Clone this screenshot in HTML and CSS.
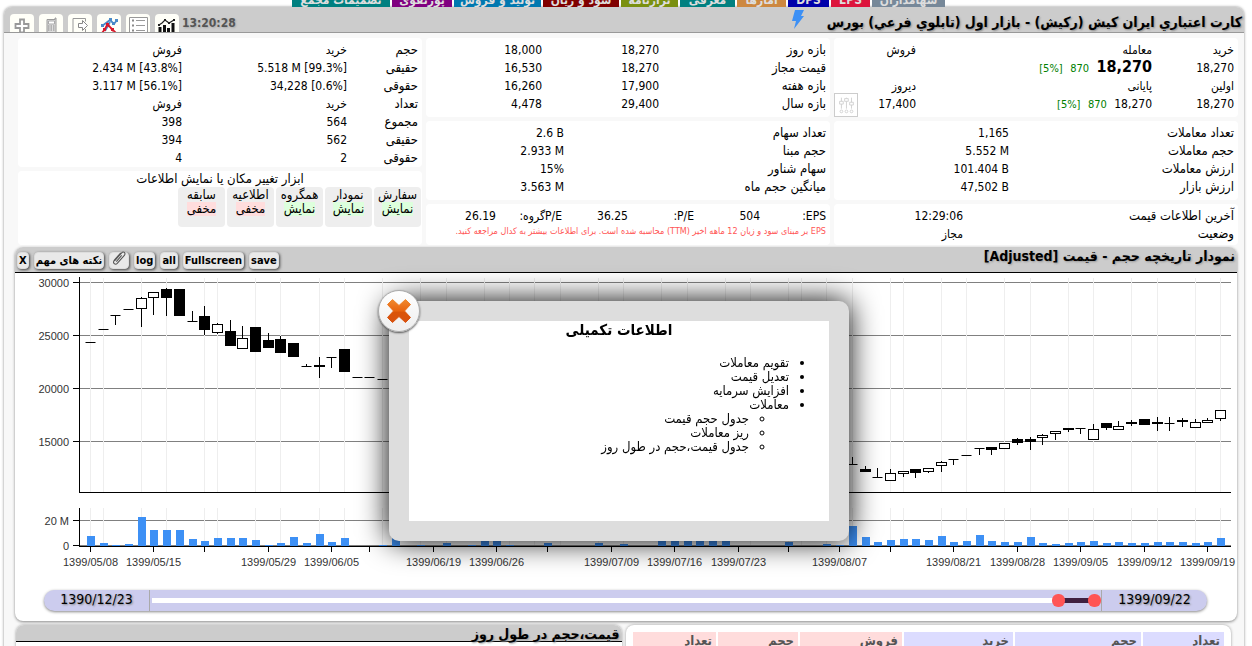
FILE: index.html
```html
<!DOCTYPE html>
<html lang="fa" dir="rtl">
<head>
<meta charset="utf-8">
<title>کارت اعتباري ايران كيش (رکیش)</title>
<link rel="stylesheet" href="styles.css">
</head>
<body>
<nav class="tabs">
  <a class="tab slate" href="#">سهامداران</a>
  <a class="tab crimson" href="#">EPS</a>
  <a class="tab navy" href="#">DPS</a>
  <a class="tab peru" href="#">آمارها</a>
  <a class="tab teal" href="#">معرفی</a>
  <a class="tab olive" href="#">ترازنامه</a>
  <a class="tab maroon" href="#">سود و زیان</a>
  <a class="tab blue" href="#">تولید و فروش</a>
  <a class="tab purple" href="#">پورتفوی</a>
  <a class="tab teal" href="#">تصمیمات مجمع</a>
</nav>

<main class="window">
  <header class="window-head">
    <h1>كارت اعتباري ايران كيش (رکيش) - بازار اول (تابلوي فرعي) بورس</h1>
    <svg class="bolt" viewBox="0 0 14 20"><path d="M4 0h9l-3 6h3L3 19l2-8H1z" fill="#3d90f5"/></svg>
    <div class="tools">
      <time>13:20:28</time>
      <button class="tool" aria-label="نمودار"><svg viewBox="0 0 24 18"><path d="M5 19V13M9.500 19v-8M13.500 19v-5M18 19V9" stroke="#111" stroke-width="3"/><path d="M4 11l3-2 3-3 4 3 5-3" fill="none" stroke="#222" stroke-width="1.200"/><path d="M3 10h2v2H3zM9 5h2v2H9zM13 8h2v2h-2zM18 5h2v2h-2z" fill="#222"/></svg></button>
      <button class="tool" aria-label="فهرست"><svg viewBox="0 0 24 18"><path d="M3.500 19V3.500h18V19" fill="#fff" stroke="#999"/><path d="M6 5.500h2v2H6zM6 10.500h2v2H6zM6 15.500h2v2H6z" fill="#888"/><path d="M10 6.500h9M10 11.500h9M10 16.500h9" stroke="#999"/></svg></button>
      <button class="tool" aria-label="مقایسه"><svg viewBox="0 0 24 18"><path d="M5 12l4-3 4-3 4 4 3-4M8 17l5-9" fill="none" stroke="#4a8ac8" stroke-width="1.800"/><path d="M5 19l3-4 2-4 3 2 6 6M10 9l6 8" fill="none" stroke="#d8182c" stroke-width="1.800"/><path d="M4 10h3v3H4zM12 4h3v3h-3zM15 8h3v3h-3zM18 5h3v3h-3z" fill="#4a8ac8"/><path d="M9 9h3v3H9zM6 14h3v3H6zM14 14h3v3h-3z" fill="#d8182c"/></svg></button>
      <button class="tool" aria-label="خروجی"><svg viewBox="0 0 24 18"><path d="M5 19V4.500h12.500v3M17.500 15v4" fill="none" stroke="#999"/><path d="M10.500 9.500h4v-3l5 5-5 5v-3h-4z" fill="#fff" stroke="#888"/></svg></button>
      <button class="tool" aria-label="موبایل"><svg viewBox="0 0 24 18"><path d="M8 19V5.500h8V4h1v15z" fill="#ddd" stroke="#999"/><path d="M9.500 7h6v3h-6z" fill="#fff" stroke="#aaa"/><path d="M9 12h7M9 14h7M9 16h7" stroke="#888" stroke-dasharray="1.500 1"/></svg></button>
      <button class="tool" aria-label="افزودن"><svg viewBox="0 0 24 18"><path d="M10 5.500h4v4.500h4.500v4H14v4.500h-4V14H5.500v-4H10z" fill="#fff" stroke="#999" stroke-width="1.800"/></svg></button>
    </div>
  </header>

  <div class="window-body">
    <section class="stats">
      <div class="stat-col">
        <div class="card price-card">
          <table class="t-price">
            <colgroup><col class="w-a"><col class="w-b"><col></colgroup>
            <tr><td>خرید</td><td>معامله</td><td>فروش</td></tr>
            <tr><td>18,270</td><td><b class="last">18,270</b> <span class="up">870</span> <bdo class="up" dir="ltr">[5%]</bdo></td><td></td></tr>
            <tr><td>اولین</td><td>پایانی</td><td>دیروز</td></tr>
            <tr><td>18,270</td><td>18,270 <span class="up">870</span> <bdo class="up" dir="ltr">[5%]</bdo></td><td>17,400</td></tr>
          </table>
          <button class="filter" aria-label="تنظیمات"><svg viewBox="0 0 24 24"><path d="M7 4v12M12.500 4v12M18 4v12" stroke="#d0d0d0"/><path d="M5 8h4v3H5zM10.500 5h4v3h-4zM16 9h4v3h-4z" fill="#fff" stroke="#d0d0d0"/><circle cx="7" cy="19" r="1.500" fill="none" stroke="#d0d0d0"/><circle cx="12.500" cy="19" r="1.500" fill="none" stroke="#d0d0d0"/><circle cx="18" cy="19" r="1.500" fill="none" stroke="#d0d0d0"/></svg></button>
        </div>
        <div class="card">
          <table class="labelled t-trade">
            <colgroup><col class="w-a"><col></colgroup>
            <tr><td>تعداد معاملات</td><td><bdo dir="ltr">1,165</bdo></td></tr>
            <tr><td>حجم معاملات</td><td><bdo dir="ltr">5.552 M</bdo></td></tr>
            <tr><td>ارزش معاملات</td><td><bdo dir="ltr">101.404 B</bdo></td></tr>
            <tr><td>ارزش بازار</td><td><bdo dir="ltr">47,502 B</bdo></td></tr>
          </table>
        </div>
        <div class="card">
          <table class="labelled t-status">
            <colgroup><col class="w-a"><col></colgroup>
            <tr><td>آخرین اطلاعات قیمت</td><td>12:29:06</td></tr>
            <tr><td>وضعیت</td><td>مجاز</td></tr>
          </table>
        </div>
      </div>

      <div class="stat-col">
        <div class="card">
          <table class="labelled t-range">
            <colgroup><col class="w-a"><col class="w-b"><col></colgroup>
            <tr><td>بازه روز</td><td>18,270</td><td>18,000</td></tr>
            <tr><td>قیمت مجاز</td><td>18,270</td><td>16,530</td></tr>
            <tr><td>بازه هفته</td><td>17,900</td><td>16,260</td></tr>
            <tr><td>بازه سال</td><td>29,400</td><td>4,478</td></tr>
          </table>
        </div>
        <div class="card">
          <table class="labelled t-share">
            <colgroup><col class="w-a"><col></colgroup>
            <tr><td>تعداد سهام</td><td><bdo dir="ltr">2.6 B</bdo></td></tr>
            <tr><td>حجم مبنا</td><td><bdo dir="ltr">2.933 M</bdo></td></tr>
            <tr><td>سهام شناور</td><td><bdo dir="ltr">15%</bdo></td></tr>
            <tr><td>میانگین حجم ماه</td><td><bdo dir="ltr">3.563 M</bdo></td></tr>
          </table>
        </div>
        <div class="card">
          <table class="t-eps">
            <tr><td>EPS:</td><td>504</td><td>P/E:</td><td>36.25</td><td>P/Eگروه:</td><td>26.19</td></tr>
          </table>
          <p class="note">EPS بر مبنای سود و زیان 12 ماهه اخیر (TTM) محاسبه شده است. برای اطلاعات بیشتر به کدال مراجعه کنید.</p>
        </div>
      </div>

      <div class="stat-col">
        <div class="card">
          <table class="labelled t-people">
            <colgroup><col class="w-a"><col class="w-b"><col></colgroup>
            <tr><td>حجم</td><td>خرید</td><td>فروش</td></tr>
            <tr><td>حقیقی</td><td><bdo dir="ltr">5.518 M [99.3%]</bdo></td><td><bdo dir="ltr">2.434 M [43.8%]</bdo></td></tr>
            <tr><td>حقوقی</td><td><bdo dir="ltr">34,228 [0.6%]</bdo></td><td><bdo dir="ltr">3.117 M [56.1%]</bdo></td></tr>
            <tr><td>تعداد</td><td>خرید</td><td>فروش</td></tr>
            <tr><td>مجموع</td><td>564</td><td>398</td></tr>
            <tr><td>حقیقی</td><td>562</td><td>394</td></tr>
            <tr><td>حقوقی</td><td>2</td><td>4</td></tr>
          </table>
        </div>
        <div class="card toggles-card">
          <p class="toggles-title">ابزار تغییر مکان یا نمایش اطلاعات</p>
          <div class="toggles">
            <button class="toggle">سفارش<span class="on">نمایش</span></button>
            <button class="toggle">نمودار<span class="on">نمایش</span></button>
            <button class="toggle">همگروه<span class="on">نمایش</span></button>
            <button class="toggle">اطلاعیه<span class="off">مخفی</span></button>
            <button class="toggle">سابقه<span class="off">مخفی</span></button>
          </div>
        </div>
      </div>
    </section>

    <section class="chart-panel">
      <header class="chart-head">
        <h2>نمودار تاریخچه حجم - قیمت [Adjusted]</h2>
        <div class="chart-tools">
          <button>save</button>
          <button>Fullscreen</button>
          <button>all</button>
          <button>log</button>
          <button class="clip" aria-label="پیوست"><svg viewBox="0 0 18 20"><path d="M4 12l8-9c2-2 5 0 3 3l-8 9c-2 2-6 0-3-4l7-8M6 13l6-7" fill="none" stroke="#555" stroke-width="1.200"/></svg></button>
          <button>نکته های مهم</button>
          <button>X</button>
        </div>
      </header>
      <svg class="chart" id="chart" viewBox="15 273 1222 313" direction="ltr"></svg>
      <div class="slider" dir="ltr">
        <label for="from">1390/12/23</label>
        <div class="track">
          <div class="rail"></div>
          <div class="fill"></div>
          <input id="from" type="range" min="0" max="1000" value="962">
          <input id="to" type="range" min="0" max="1000" value="1000">
        </div>
        <label for="to">1399/09/22</label>
      </div>
    </section>

    <section class="bottom">
      <div class="orders">
        <table>
          <colgroup><col class="c1"><col class="c2"><col class="c3"><col class="c4"><col class="c5"><col></colgroup>
          <tr><th class="buy">تعداد</th><th class="buy">حجم</th><th class="buy">خرید</th><th class="sell">فروش</th><th class="sell">حجم</th><th class="sell">تعداد</th></tr>
        </table>
      </div>
      <div class="intraday"><h2>قیمت،حجم در طول روز</h2></div>
    </section>
  </div>
</main>

<div class="modal" role="dialog" aria-labelledby="modal-title">
  <button class="close" aria-label="بستن"><svg viewBox="0 0 24 24"><defs><linearGradient id="o" x1="0" y1="0" x2="0" y2="1"><stop offset="0" stop-color="#f08a30"/><stop offset=".5" stop-color="#e8640f"/><stop offset=".55" stop-color="#da5408"/><stop offset="1" stop-color="#d85210"/></linearGradient></defs><path d="M5.500 0.500L12 6.500 18.500 0.500 23.500 5.500 17.500 12 23.500 18.500 18.500 23.500 12 17.500 5.500 23.500 0.500 18.500 6.500 12 0.500 5.500z" fill="url(#o)" stroke="url(#o)" stroke-linejoin="round"/></svg></button>
  <h2 id="modal-title">اطلاعات تکمیلی</h2>
  <ul>
    <li>تقویم معاملات</li>
    <li>تعدیل قیمت</li>
    <li>افزایش سرمایه</li>
    <li>معاملات
      <ul>
        <li>جدول حجم قیمت</li>
        <li>ریز معاملات</li>
        <li>جدول قیمت،حجم در طول روز</li>
      </ul>
    </li>
  </ul>
</div>
<script src="chart.js"></script>
</body>
</html>
```
FILE: styles.css
```css
* { box-sizing: border-box; }
body {
  margin: 0;
  height: 100vh;
  overflow: hidden;
  background: #fff;
  color: #000;
  font: 12px/18px "DejaVu Sans Condensed", "DejaVu Sans", sans-serif;
}
h1, h2, p, ul { margin: 0; padding: 0; }
a { text-decoration: none; }
button { font-family: inherit; color: inherit; cursor: pointer; }
table { width: 100%; table-layout: fixed; border-collapse: collapse; }
td { padding: 0; height: 18px; white-space: nowrap; text-align: right; vertical-align: middle; }

/* Tab strip */
.tabs {
  display: flex;
  align-items: flex-end;
  gap: 2px;
  height: 7px;
  margin-right: 307px;
  overflow: hidden;
}
.tab {
  flex: none;
  line-height: 14px;
  text-align: center;
  font-weight: bold;
  color: #ddd;
}
.slate { background: #778899; width: 73px; }
.crimson { background: #dc143c; width: 39px; }
.navy { background: #0000aa; width: 41px; }
.peru { background: #cd8840; width: 49px; }
.teal { background: #008080; width: 55px; }
.olive { background: #7a9010; width: 57px; }
.maroon { background: #800000; width: 76px; }
.blue { background: #0078b0; width: 87px; }
.purple { background: #800080; width: 60px; }
.teal:last-child { width: 98px; }

/* Main window */
.window {
  margin: 0 8px 0 4px;
  background: #f8f8f8;
  border-radius: 8px 8px 0 0;
  box-shadow: 0 0 3px #888;
}
.window-head {
  display: flex;
  height: 26px;
  background: #ccc;
  border-bottom: 1px solid #999;
  border-radius: 8px 8px 0 0;
  padding: 0 2px 0 6px;
}
.window-head h1 {
  font-size: 14px;
  line-height: 30px;
  text-shadow: 1px 1px 2px #888;
  white-space: nowrap;
}
.bolt { width: 14px; height: 20px; margin: 3px 22px 0 0; }
.tools { display: flex; gap: 5px; margin-right: auto; padding-top: 7px; }
.tools time { font-weight: bold; color: #555; text-shadow: 1px 1px 2px #aaa; margin-left: -2px; }
.tool {
  width: 24px;
  height: 18px;
  padding: 0;
  border: 0;
  background: #fffff8;
  border-radius: 4px 4px 0 0;
  overflow: hidden;
}
.tool svg { display: block; width: 24px; height: 18px; }
.window-body { padding: 5px 6px 0 14px; }

/* Stat cards */
.stats { display: grid; grid-template-columns: repeat(3, 1fr); gap: 4px; }
.stat-col { display: flex; flex-direction: column; gap: 4px; }
.card { position: relative; background: #fff; border-radius: 4px; padding: 3px 4px 4px; }
.stat-col .card:last-child { flex: 1; padding-bottom: 2px; }
.labelled td:first-child { font-size: 13px; }
.up { color: green; font-size: 11px; margin-right: 4px; }
.last { font-size: 16px; }
.t-price { line-height: 14px; }
.t-price .w-a { width: 82px; }
.t-price .w-b { width: 236px; }
.t-trade .w-a { width: 225px; }
.t-status .w-a { width: 271px; }
.t-range .w-a { width: 167px; }
.t-range .w-b { width: 117px; }
.t-share .w-a { width: 262px; }
.t-people .w-a { width: 71px; }
.t-people .w-b { width: 165px; }
.filter {
  position: absolute;
  left: 0;
  bottom: 0;
  width: 24px;
  height: 24px;
  padding: 0;
  border: 1px solid #ccc;
  background: #fff;
}
.filter svg { display: block; width: 22px; height: 22px; }
.note { font-size: 9px; line-height: 12px; color: #f55; white-space: nowrap; }
.stat-col:last-child .card:first-child { padding: 3px 4px 0; }
.toggles-card { text-align: center; }
.stat-col .toggles-card:last-child { padding: 0 1px; }
.toggles-title { font-size: 13px; line-height: 16px; }
.toggles { display: flex; gap: 2px; }
.toggle {
  width: 47px;
  height: 40px;
  padding: 1px 0 0;
  border: 0;
  border-radius: 4px;
  background: #eee;
  font-size: 13px;
  line-height: 14px;
  display: flex;
  flex-direction: column;
  align-items: center;
}
.on { background: #ddffdd; }
.off { background: #ffdddd; }

/* Chart panel */
.chart-panel {
  margin: 2px 1px 0 -3px;
  background: #fff;
  border-radius: 8px;
  box-shadow: 0 1px 3px #888;
  padding-bottom: 10px;
}
.chart-head {
  display: flex;
  justify-content: space-between;
  height: 26px;
  background: #ccc;
  border-bottom: 1px solid #000;
  border-radius: 8px 8px 0 0;
  padding: 0 2px;
}
.chart-head h2 { font-size: 14px; line-height: 18px; text-shadow: 1px 1px 2px #999; }
.chart-tools { display: flex; gap: 5px; padding-top: 5px; }
.chart-tools button {
  height: 17px;
  padding: 0 1px;
  border: 1px solid #ddd;
  border-radius: 4px;
  background: #e9e9e9;
  box-shadow: 1px 1px 3px #444;
  font-size: 11px;
  font-weight: bold;
  line-height: 15px;
}
.chart-tools .clip { width: 20px; }
.clip svg { display: block; width: 16px; height: 18px; margin-top: -4px; }
.chart { display: block; width: 100%; height: auto; font: 11px "Liberation Sans", sans-serif; }
.grid-v { stroke: #eee; }
.grid-h { stroke: #808080; }
.axis { stroke: #000; }
.hollow { fill: #fff; stroke: #000; }
.solid { fill: #000; stroke: #000; }
.bar { fill: #3d90f5; }
.chart text { fill: #333; }

.slider {
  display: flex;
  height: 21px;
  margin: 4px 30px 0 29px;
  border-radius: 11px;
  background: #ccccee;
  box-shadow: 0 1px 3px #888;
}
.slider label { width: 105px; text-align: center; font-size: 14px; text-shadow: 1px 1px 2px #888; }
.track { position: relative; flex: 1; border: solid #aaa; border-width: 0 1px; }
.rail, .fill { position: absolute; top: 8px; height: 5px; left: 2px; right: 4%; background: #fff; }
.fill { left: 96%; right: 1%; background: #402040; }
.track input {
  position: absolute;
  inset: 0;
  width: 100%;
  margin: 0;
  background: none;
  appearance: none;
  pointer-events: none;
}
.track input::-webkit-slider-thumb {
  appearance: none;
  pointer-events: auto;
  width: 13px;
  height: 13px;
  border-radius: 6px;
  background: #ff5555;
}

/* Bottom panels */
.bottom { display: grid; grid-template-columns: 1fr 1fr; gap: 4px; margin: 4px 7px 0 -2px; }
.orders, .intraday { border-radius: 8px 8px 0 0; box-shadow: 0 0 3px #999; background: #fff; }
.orders { padding: 5px 5px 0; }
.orders table { border-collapse: separate; border-spacing: 2px; }
.orders th { height: 24px; padding: 0 4px; text-align: right; vertical-align: top; font-size: 13px; line-height: 18px; color: #555; }
.buy { background: #dcdcff; }
.sell { background: #ffdcdc; }
.c1 { width: 81px; }
.c2 { width: 126px; }
.c3 { width: 109px; }
.c4 { width: 102px; }
.c5 { width: 80px; }
.intraday h2 {
  height: 17px;
  background: #ccc;
  border-bottom: 1px solid #000;
  border-radius: 8px 8px 0 0;
  padding: 0 2px;
  font-size: 14px;
  line-height: 18px;
  text-shadow: 1px 1px 2px #999;
}

/* Dialog */
.modal {
  position: fixed;
  top: 301px;
  left: calc(50% - 237px);
  width: 460px;
  height: 240px;
  border: 20px solid #ddd;
  border-radius: 10px;
  background: #fff;
  box-shadow: 0 0 30px #000;
}
.modal h2 { text-align: center; font-size: 15px; line-height: 18px; }
.modal ul { padding-right: 40px; font-size: 13px; line-height: 14px; list-style: disc; }
.modal > ul { margin-top: 17px; }
.modal ul ul { list-style: circle; }
.close {
  position: absolute;
  top: -31px;
  left: -31px;
  width: 42px;
  height: 42px;
  padding: 8px;
  border: 1px solid #aaa;
  border-radius: 50%;
  background: linear-gradient(#fff, #eee);
  box-shadow: 0 1px 2px #555;
}
.close svg { display: block; width: 24px; height: 24px; }
```
FILE: chart.js
```js
const svg = document.getElementById('chart');
const NS = 'http://www.w3.org/2000/svg';
function add(tag, attrs, text) {
  const el = document.createElementNS(NS, tag);
  for (const k in attrs) el.setAttribute(k, attrs[k]);
  if (text) el.textContent = text;
  svg.appendChild(el);
}
const line = (cls, x1, y1, x2, y2) => add('line', { class: cls, x1, y1, x2, y2 });
const px = i => Math.floor(90.5 + i * 12.697) + 0.5;

// Horizontal price and volume levels
[[282.5, '30000'], [335.5, '25000'], [388.5, '20000'], [441.5, '15000'], [520.5, '20 M'], [545.5, '0']].forEach(([y, t]) => {
  line('grid-h', 80, y, 1231, y);
  line('axis', 73, y, 79, y);
  add('text', { x: 69, y: y + 4, 'text-anchor': 'end' }, t);
});

// Week separators
[0, 1, 4, 6, 9, 10, 13, 15, 18, 20, 23, 26, 28, 31, 33, 35, 37, 40, 42, 45, 47, 50, 52, 55, 56, 58, 60, 63, 64, 67, 69, 72, 74, 77, 79, 82, 84, 87, 89].forEach(i => {
  line('grid-v', px(i), 278, px(i), 492);
  line('grid-v', px(i), 508, px(i), 545);
});

// Candles: index, high, body top, body bottom, low, hollow
[
  [0, 342, 342, 342, 342], [1, 329, 329, 329, 329], [2, 315, 315, 315, 325], [3, 309, 309, 309, 309],
  [4, 297, 298, 308, 327, 1], [5, 292, 292, 297, 315, 1], [6, 288, 289, 297, 316], [7, 289, 289, 315, 315],
  [8, 311, 321, 321, 321], [9, 306, 316, 329, 335], [10, 323, 324, 332, 334, 1], [11, 320, 331, 345, 345],
  [12, 326, 338, 348, 348, 1], [13, 327, 327, 351, 351], [14, 333, 340, 347, 347], [15, 336, 339, 352, 352],
  [16, 343, 343, 356, 356], [17, 364, 366, 366, 366], [18, 357, 365, 366, 378], [19, 357, 357, 357, 368],
  [20, 349, 349, 371, 371], [21, 377, 377, 377, 377], [22, 377, 377, 377, 377], [23, 379, 379, 379, 379],
  [60, 457, 464, 464, 464], [61, 466, 469, 471, 471], [62, 468, 477, 477, 477], [63, 469, 473, 480, 480, 1],
  [64, 471, 471, 473, 477, 1], [65, 469, 469, 472, 478], [66, 468, 468, 471, 473, 1], [67, 461, 462, 465, 472, 1],
  [68, 459, 459, 459, 465], [69, 455, 455, 455, 455], [70, 448, 448, 448, 455], [71, 447, 447, 449, 455],
  [72, 443, 443, 448, 448, 1], [73, 438, 439, 442, 445], [74, 437, 439, 441, 450], [75, 434, 435, 437, 445, 1],
  [76, 431, 431, 433, 440, 1], [77, 428, 428, 429, 432], [78, 428, 428, 428, 434], [79, 424, 429, 439, 439, 1],
  [80, 423, 423, 427, 430], [81, 421, 426, 429, 430, 1], [82, 420, 422, 423, 426], [83, 419, 419, 424, 424],
  [84, 417, 422, 423, 431], [85, 417, 423, 423, 431], [86, 418, 420, 421, 427], [87, 419, 422, 427, 428, 1],
  [88, 418, 420, 422, 423, 1], [89, 410, 410, 418, 421, 1]
].forEach(([i, hi, top, bot, lo, hollow]) => {
  const x = px(i);
  if (lo > hi) line('axis', x, hi, x, lo);
  if (top === bot) line('axis', x - 5, top + 0.5, x + 5, top + 0.5);
  else add('rect', { class: hollow ? 'hollow' : 'solid', x: x - 5, y: top + 0.5, width: 10, height: bot - top });
});

// Volume bars: index -> height
const volumes = {
  0: 10, 1: 3, 2: 1, 3: 2, 4: 29, 5: 16, 6: 16, 7: 16, 8: 7, 9: 5, 10: 8, 11: 8, 12: 8, 13: 6, 14: 1, 15: 3, 16: 9,
  17: 3, 18: 12, 19: 4, 20: 8, 23: 1, 24: 8, 26: 1, 28: 3, 30: 1, 31: 6, 32: 6, 33: 1, 36: 3, 40: 3, 42: 2, 45: 6,
  46: 6, 47: 6, 48: 6, 49: 6, 50: 6, 55: 4, 58: 2, 59: 1, 60: 20, 61: 9, 62: 4, 63: 6, 64: 7, 65: 7, 66: 6, 67: 10,
  68: 4, 69: 5, 70: 11, 71: 5, 72: 4, 73: 4, 74: 9, 75: 3, 76: 2, 77: 3, 78: 4, 79: 5, 80: 3, 81: 4, 82: 3, 83: 3,
  84: 4, 85: 4, 86: 4, 87: 3, 88: 4, 89: 8
};
for (const i in volumes) add('rect', { class: 'bar', x: px(+i) - 3.5, y: 546 - volumes[i], width: 8, height: volumes[i] });

line('axis', 79.5, 277, 79.5, 493);
line('axis', 79, 492.5, 1231, 492.5);
line('axis', 79.5, 508, 79.5, 547);
line('axis', 79, 546.5, 1231, 546.5);

// Dates
[
  [0, '05/08'], [5, '05/15'], [9], [14, '05/29'], [19, '06/05'], [22], [27, '06/19'], [32, '06/26'], [36],
  [41, '07/09'], [46, '07/16'], [51, '07/23'], [55], [59, '08/07'], [63], [68, '08/21'], [73, '08/28'],
  [78, '09/05'], [83, '09/12'], [88, '09/19']
].forEach(([i, t]) => {
  line('axis', px(i), 547, px(i), 552);
  if (t) add('text', { x: px(i), y: 566, 'text-anchor': 'middle' }, '1399/' + t);
});
```
